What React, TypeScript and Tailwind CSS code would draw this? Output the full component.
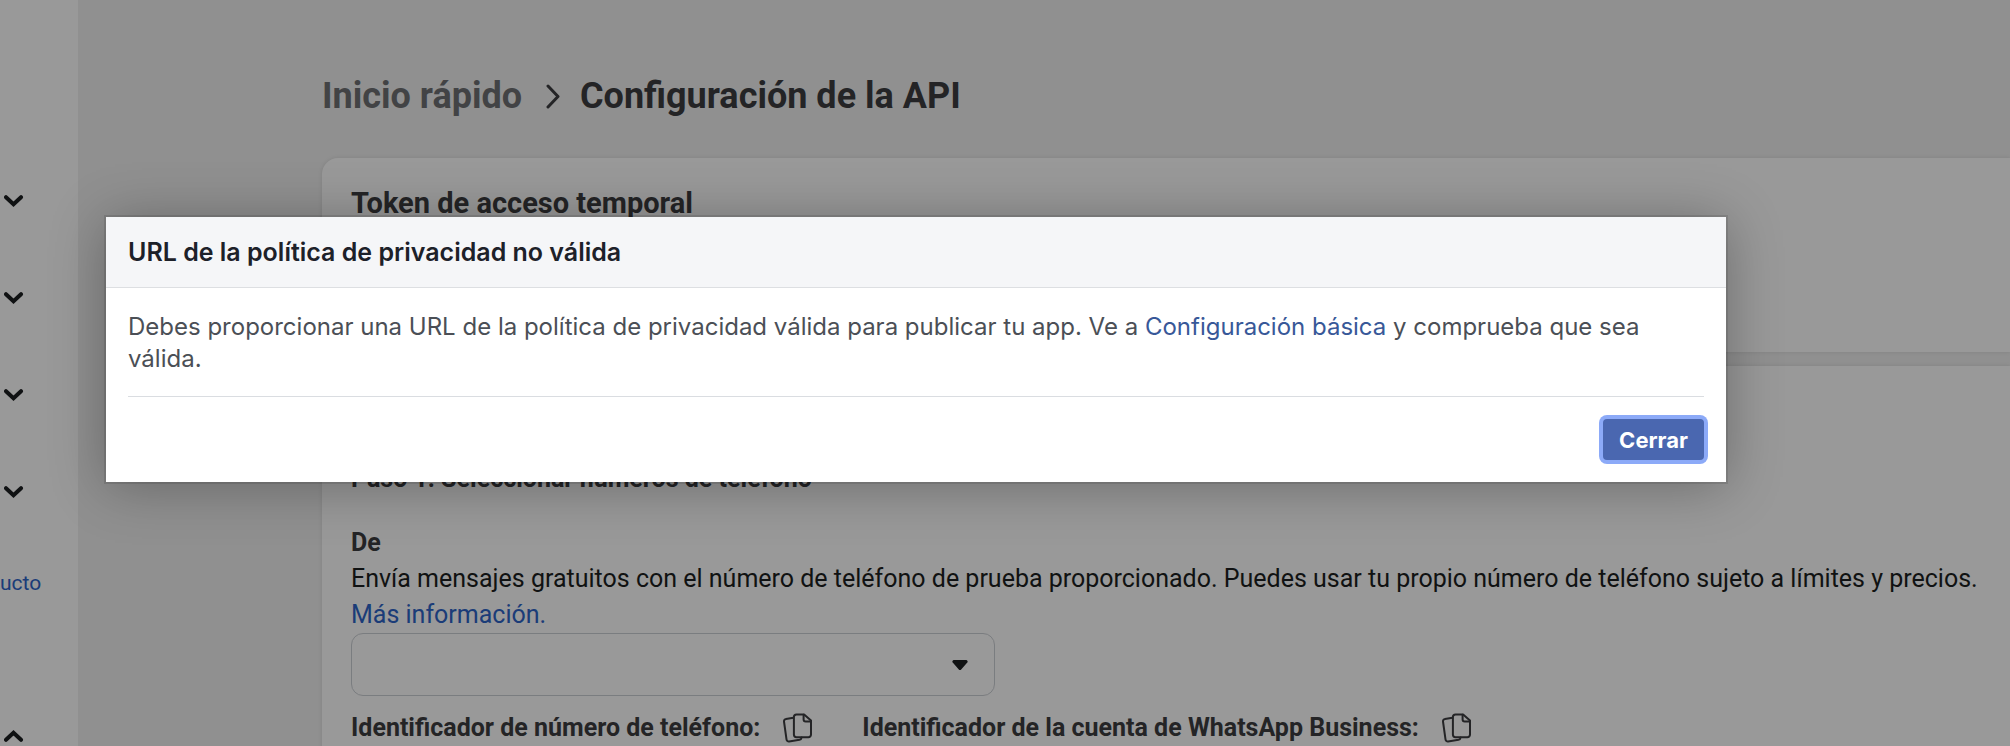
type IconProps = { className?: string };

function ChevronIcon({ className = "" }: IconProps) {
  return (
    <svg viewBox="0 0 20 12" fill="none" stroke="currentColor" strokeWidth="4" strokeLinecap="round" strokeLinejoin="miter" className={className} aria-hidden="true">
      <path d="M2 2.2 9.5 9.2 17 2.2" />
    </svg>
  );
}

function CopyIcon() {
  return (
    <svg viewBox="0 0 32 32" fill="none" stroke="currentColor" strokeWidth="2" strokeLinecap="round" strokeLinejoin="round" className="size-8" aria-hidden="true">
      <path d="M14.5 2.4h7.6l6.9 6.2v14a2.6 2.6 0 0 1-2.6 2.6H14.5a2.6 2.6 0 0 1-2.6-2.6V5a2.6 2.6 0 0 1 2.6-2.6Z" />
      <path d="M21.6 2.8v4.6a2 2 0 0 0 2 2h5" />
      <path d="M11.4 5.8 3.9 7a2.2 2.2 0 0 0-1.9 2.5l2.5 17.9a2.3 2.3 0 0 0 2.6 2l10.4-1.6a2.6 2.6 0 0 0 2.1-2.3" />
    </svg>
  );
}

function Sidebar() {
  return (
    <aside className="w-[78px] shrink-0 overflow-hidden bg-white pt-[152px] text-[#1c1e21]">
      {[1, 2, 3, 4].map((n) => (
        <button key={n} type="button" aria-label={`Expandir sección ${n}`} className="flex h-[97px] w-full items-center pl-1">
          <ChevronIcon className="h-3 w-5" />
        </button>
      ))}
      <div className="h-[147px] pt-[23px]">
        <a href="#producto" className="block text-[21px] leading-10 text-[#2d64c8]">ucto</a>
      </div>
      <button type="button" aria-label="Contraer sección" className="flex h-[97px] w-full items-center pl-1">
        <ChevronIcon className="h-3 w-5 -scale-y-100" />
      </button>
    </aside>
  );
}

function Identifier({ label }: { label: string }) {
  return (
    <div className="flex items-center gap-[22px]">
      <span className="font-bold">{label}</span>
      <button type="button" aria-label={`Copiar: ${label}`}>
        <CopyIcon />
      </button>
    </div>
  );
}

function Page() {
  return (
    <main className="min-w-0 flex-1 pl-[244px] pt-[72px]">
      <nav aria-label="Ruta" className="flex items-center gap-5 text-4xl leading-[48px] font-bold text-[#3c3d40]">
        <a href="#inicio" className="leading-[48px] text-[#6f7073]">Inicio rápido</a>
        <svg viewBox="0 0 18 28" fill="none" stroke="currentColor" strokeWidth="3" strokeLinecap="round" strokeLinejoin="round" className="h-7 w-[18px]" aria-hidden="true">
          <path d="M6 4 16 14.5 6 25" />
        </svg>
        <h1 className="leading-[48px]">Configuración de la API</h1>
      </nav>

      <section className="mt-[38px] min-h-[194px] rounded-l-2xl bg-white px-[29px] py-[27px] shadow-[0_0_4px_rgba(0,0,0,0.1)]">
        <h2 className="text-[29px] leading-9 font-bold text-[#3c3d40]">Token de acceso temporal</h2>
      </section>

      <section className="mt-3.5 rounded-l-2xl bg-white px-[29px] pt-[95px] pb-7 text-[25px] leading-9 text-[#3c3d40] shadow-[0_0_4px_rgba(0,0,0,0.1)]">
        <h3 className="font-bold">Paso 1: Seleccionar números de teléfono</h3>
        <label htmlFor="from" className="mt-7 block font-bold">De</label>
        <p className="whitespace-nowrap text-[#1c1e21]">
          Envía mensajes gratuitos con el número de teléfono de prueba proporcionado. Puedes usar tu propio número de teléfono sujeto a límites y precios.
          <br />
          <a href="#informacion" className="text-[#2d64c8]">Más información.</a>
        </p>
        <div className="relative max-w-[644px]">
          <select id="from" className="block h-[63px] w-full appearance-none rounded-xl border border-[#ccd0d5] bg-white px-4">
            <option></option>
          </select>
          <svg viewBox="0 0 16 10" className="pointer-events-none absolute top-[27px] right-[27px] h-2.5 w-4 text-[#1c1e21]" aria-hidden="true">
            <path d="M2 0h12a1.6 1.6 0 0 1 1.3 2.6L9.4 9.3a1.8 1.8 0 0 1-2.8 0L.7 2.6A1.6 1.6 0 0 1 2 0Z" fill="currentColor" />
          </svg>
        </div>
        <div className="mt-3.5 flex gap-12">
          <Identifier label="Identificador de número de teléfono:" />
          <Identifier label="Identificador de la cuenta de WhatsApp Business:" />
        </div>
      </section>
    </main>
  );
}

function PrivacyDialog() {
  return (
    <div className="absolute inset-0 bg-black/40 pt-[217px] pl-[106px]">
      <div
        role="dialog"
        aria-modal="true"
        aria-labelledby="dialog-title"
        className="w-full max-w-[1620px] bg-white font-[Inter,sans-serif] shadow-[0_4px_52px_rgba(0,0,0,0.3),0_0_0_2px_rgba(0,0,0,0.1)]"
      >
        <header className="border-b border-[#dddfe2] bg-[#f5f6f8] px-[22px] py-[17px]">
          <h2 id="dialog-title" className="text-[25px] leading-9 font-semibold text-[#1d2129]">URL de la política de privacidad no válida</h2>
        </header>
        <div className="px-[22px] pt-[23px] pb-[22px]">
          <p className="border-b border-[#dadde1] pb-[21px] text-2xl leading-8 text-[#4b4f56]">
            Debes proporcionar una URL de la política de privacidad válida para publicar tu app. Ve a{" "}
            <a href="#configuracion" className="text-[#385898]">Configuración básica</a> y comprueba que sea válida.
          </p>
          <div className="mt-[22px] flex justify-end">
            <button type="button" className="h-[41px] rounded bg-[#4a67b0] px-4 text-[22px] leading-8 font-bold text-white ring-4 ring-[#8caaf8]">
              Cerrar
            </button>
          </div>
        </div>
      </div>
    </div>
  );
}

export default function App() {
  return (
    <div className="relative flex h-screen overflow-hidden bg-[#f0f0f0] font-[Roboto,sans-serif]">
      <Sidebar />
      <Page />
      <PrivacyDialog />
    </div>
  );
}
